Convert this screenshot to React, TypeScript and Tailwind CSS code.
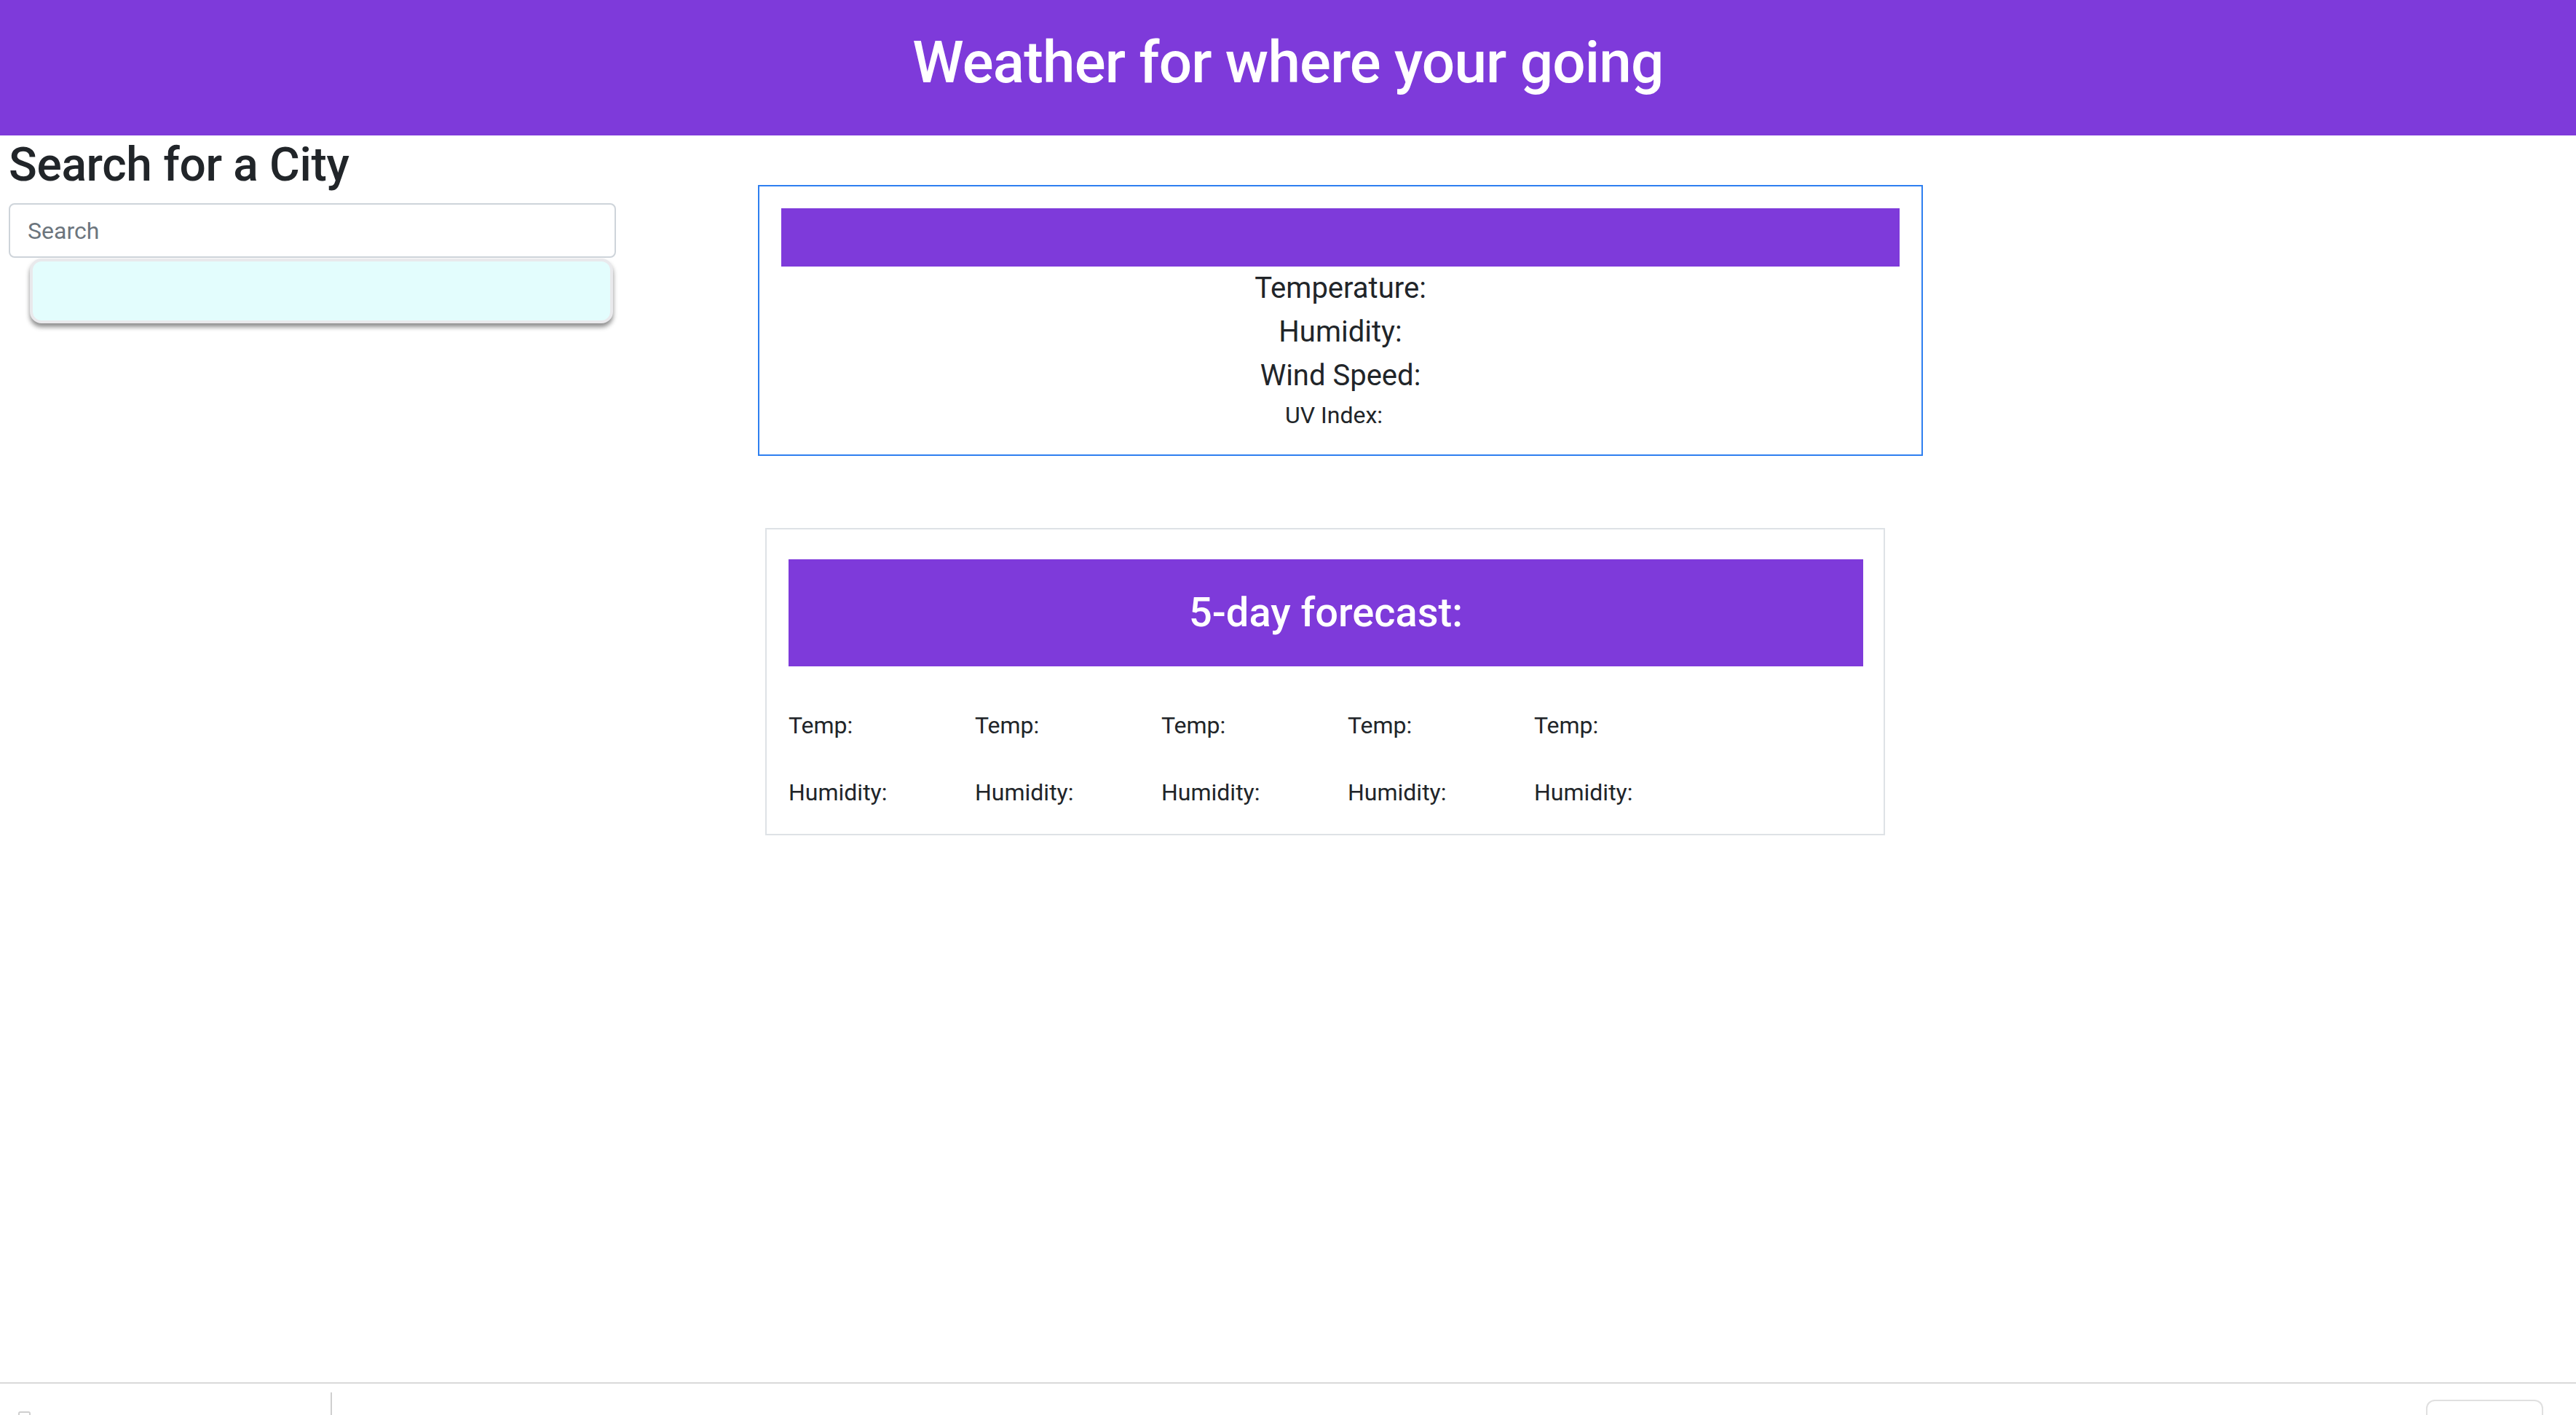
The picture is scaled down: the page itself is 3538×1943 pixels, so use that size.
import React from 'react'

const days = [1, 2, 3, 4, 5]

export default function App() {
  return (
    <div
      className="min-h-[1943px] flex flex-col bg-white text-[#212529]"
      style={{ fontFamily: 'Roboto, "Liberation Sans", sans-serif' }}
    >
      {/* Header */}
      <header className="h-[186px] bg-[#7e3ada] pt-[38px]">
        <h1 className="text-center text-white text-[80px] leading-[96px] font-medium tracking-[-0.01em]">
          Weather for where your going
        </h1>
      </header>

      <main className="flex-1 flex">
        {/* Search column */}
        <div className="w-[1041px] pl-[12px]">
          <h2 className="text-[64px] leading-[77px] font-medium pt-[2px] mb-[14px] tracking-[-0.005em]">Search for a City</h2>
          <input
            type="text"
            placeholder="Search"
            className="block w-[834px] h-[75px] px-[24px] text-[32px] border-2 border-[#ced4da] rounded-[8px] placeholder:text-[#6c757d] outline-none"
          />
          <div className="ml-[29px] mt-[1px] w-[801px] h-[89px] bg-[#e3fdfd] border-4 border-[#e9e9ec] rounded-[16px] shadow-[0_5px_6px_rgba(0,0,0,0.45)]" />
        </div>

        {/* Weather column */}
        <div className="flex flex-col pt-[68px]">
          <div className="w-[1600px] border-2 border-[#2e7ff0] p-[30px]">
            <div className="h-[80px] bg-[#7e3ada]" />
            <p className="text-[40px] leading-[60px] text-center">Temperature:</p>
            <p className="text-[40px] leading-[60px] text-center">Humidity:</p>
            <p className="text-[40px] leading-[60px] text-center">Wind Speed:</p>
            <p className="text-[32px] leading-[48px] text-center pr-[18px]">UV Index: </p>
          </div>

          <div className="ml-[10px] mt-[99px] w-[1538px] border-2 border-[#dee2e6] pt-[41px] pl-[30px] pr-[28px] pb-[33px]">
            <div className="h-[147px] bg-[#7e3ada] flex items-center justify-center">
              <h3 className="text-white text-[56px] leading-[67px] font-medium">5-day forecast:</h3>
            </div>
            <div className="flex mt-[57px]">
              {days.map((d) => (
                <div key={d} className="w-[256px] text-[32px] leading-[48px]">
                  <p>Temp:</p>
                  <p className="mt-[44px]">Humidity:</p>
                </div>
              ))}
            </div>
          </div>
        </div>
      </main>

      {/* Bottom bar */}
      <footer className="h-[45px] border-t-2 border-[#d9d9d9] flex">
        <div className="w-[454px] relative">
          <div className="absolute left-[25px] top-[38px] w-[17px] h-[10px] border-2 border-[#cfcfcf] rounded-[3px]" />
        </div>
        <div className="mt-[12px] w-[2px] bg-[#cfcfcf]" />
        <div className="flex-1 flex justify-end pr-[45px] pt-[22px]">
          <div className="w-[161px] h-[30px] border-2 border-b-0 border-[#e0e0e0] rounded-t-[12px]" />
        </div>
      </footer>
    </div>
  )
}
